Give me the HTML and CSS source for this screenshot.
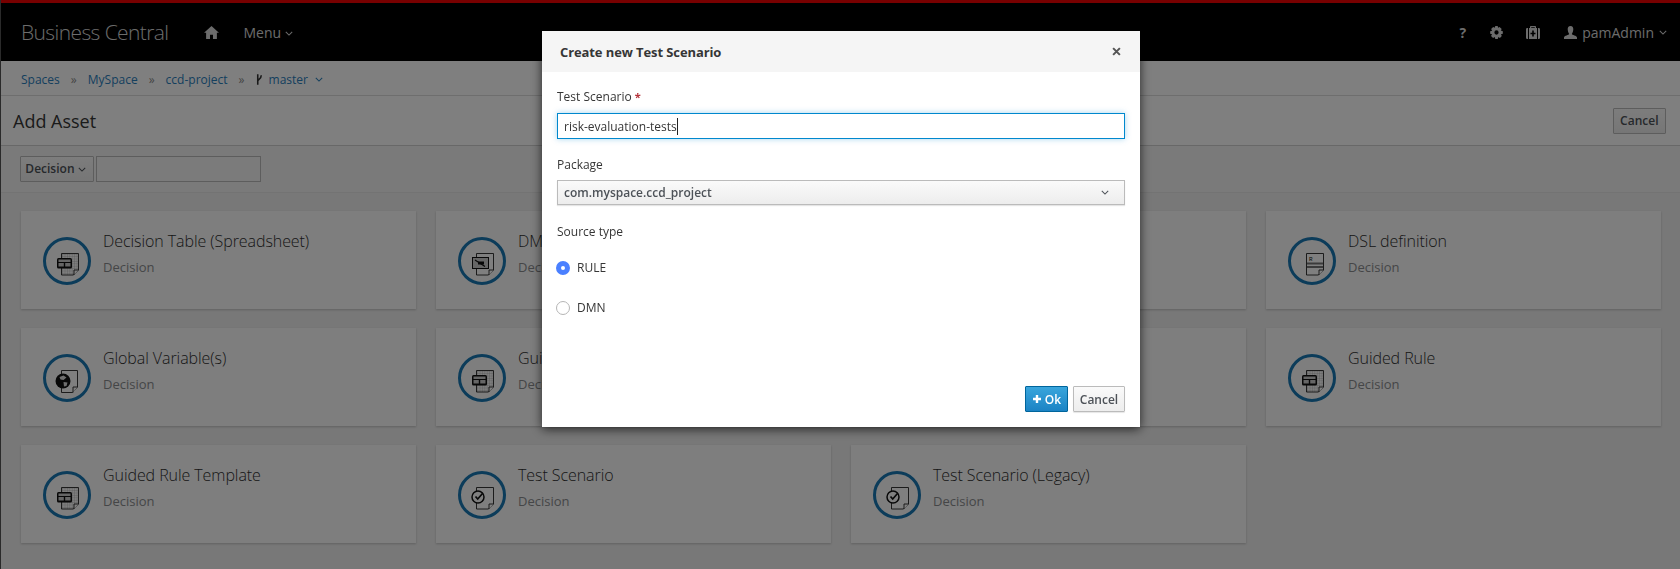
FILE: index.html
```html
<!DOCTYPE html>
<html lang="en">
<head>
  <meta charset="UTF-8" />
  <meta name="viewport" content="width=device-width, initial-scale=1.0"/>
  <title>Business Central</title>
  <link rel="stylesheet" href="styles.css">
</head>
<body>
  <!-- Icon sprite -->
  <svg class="sprite" width="0" height="0">
    <defs>
      <pattern id="grid" width="2.4" height="2.4" patternUnits="userSpaceOnUse">
        <path d="M2.4 0H0V2.4" fill="none" stroke="#999" stroke-width=".5"/>
      </pattern>
      <symbol id="ring" viewBox="0 0 48 48">
        <circle cx="24" cy="24" r="22.5" fill="none" stroke="#1878b4" stroke-width="3"/>
      </symbol>
      <symbol id="doc-table" viewBox="0 0 48 48">
        <path d="M18.5 16.5H35.5V33L30.5 38H18.5Z" fill="url(#grid)" stroke="#222" stroke-width=".9"/>
        <path d="M35.5 33H31V38" fill="#fff" stroke="#222" stroke-width=".9"/>
        <rect x="14" y="21" width="15" height="10.5" rx="1.5" fill="#111"/>
        <rect x="15.5" y="22.5" width="12" height="2.5" fill="#ccc"/>
        <rect x="15.5" y="26" width="5.3" height="3.5" fill="#ccc"/>
        <rect x="22.2" y="26" width="5.3" height="3.5" fill="#ccc"/>
      </symbol>
      <symbol id="doc-dmn" viewBox="0 0 48 48">
        <path d="M18.5 16.5H35.5V33L30.5 38H18.5Z" fill="#fff" stroke="#222" stroke-width=".9"/>
        <path d="M35.5 33H31V38" fill="#fff" stroke="#222" stroke-width=".9"/>
        <rect x="14.5" y="20.5" width="16" height="11" fill="#ccc" stroke="#111"/>
        <path d="M17 23L27 29.5" stroke="#111" stroke-width="1.2"/>
        <rect x="20" y="24.5" width="6" height="3" fill="#111"/>
      </symbol>
      <symbol id="doc-globe" viewBox="0 0 48 48">
        <path d="M18.5 16.5H34.5V33L29.5 38.5H18.5Z" fill="#fff" stroke="#222" stroke-width=".9"/>
        <path d="M34.5 33H30V38.5" fill="#fff" stroke="#222" stroke-width=".9"/>
        <circle cx="20" cy="27" r="7.5" fill="#111"/>
        <path d="M16.5 23L20.5 21.5L23.5 23.5L20.5 26L17.5 25.5ZM20.5 28L24.5 28.5L23.5 32L21 32.5Z" fill="#ddd"/>
      </symbol>
      <symbol id="doc-check" viewBox="0 0 48 48">
        <path d="M18.5 16.5H35.5V33L30.5 38H18.5Z" fill="#fff" stroke="#222" stroke-width=".9"/>
        <path d="M35.5 33H31V38" fill="#fff" stroke="#222" stroke-width=".9"/>
        <circle cx="20" cy="26" r="6" fill="#fff" stroke="#111" stroke-width="1.5"/>
        <path d="M17.5 25.5L19.7 28L24.5 22.5" fill="none" stroke="#111" stroke-width="1.7"/>
      </symbol>
      <symbol id="doc-dsl" viewBox="0 0 48 48">
        <path d="M18.5 16.5H35.5V33L30.5 38H18.5Z" fill="#fff" stroke="#222" stroke-width=".9"/>
        <path d="M35.5 33H31V38" fill="#fff" stroke="#222" stroke-width=".9"/>
        <text x="21" y="24" font-family="Liberation Mono, monospace" font-size="6" fill="#111">R</text>
        <path d="M19 26.5H35M19 30H35" stroke="#777" stroke-width="2"/>
      </symbol>
      <symbol id="chevron" viewBox="0 0 10 6">
        <path d="M1 1L5 5L9 1" fill="none" stroke="currentColor" stroke-width="1.3"/>
      </symbol>
    </defs>
  </svg>

  <div class="page">
    <nav class="navbar">
      <div class="nav-left">
        <span class="brand">Business Central</span>
        <svg class="nav-icon home-icon" viewBox="0 0 16 14"><path d="M8 0L16 7.2H13.8V14H9.6V9.4H6.4V14H2.2V7.2H0Z" fill="currentColor"/></svg>
        <span class="nav-menu">Menu <svg class="caret"><use href="#chevron"/></svg></span>
      </div>
      <div class="nav-right">
        <span class="nav-help">?</span>
        <svg class="nav-icon gear-icon" viewBox="0 0 14 14"><path fill-rule="evenodd" d="M5.7 0H8.3L8.7 2L10.3 1L12.6 3.1L11.6 4.9L13.8 5.6V8.4L11.8 9L12.7 10.8L10.7 12.9L9 11.8L8.3 14H5.7L5.1 11.9L3.3 12.9L1.1 10.8L2.2 9L.2 8.4V5.6L2.3 5L1.2 3.1L3.4 1L5.1 2ZM7 4.7A2.3 2.3 0 1 0 7 9.3A2.3 2.3 0 1 0 7 4.7Z" fill="currentColor"/></svg>
        <svg class="nav-icon case-icon" viewBox="0 0 14 13"><path fill-rule="evenodd" d="M4 2V.8Q4 0 4.8 0H9.2Q10 0 10 .8V2H11V13H3V2ZM5.2 2H8.8V1.2H5.2ZM6.2 4.5V6.7H4.5V8.3H6.2V10.5H7.8V8.3H9.5V6.7H7.8V4.5ZM0 3.2Q0 2 1.2 2H2V13H1.2Q0 13 0 11.8ZM12 2H12.8Q14 2 14 3.2V11.8Q14 13 12.8 13H12Z" fill="currentColor"/></svg>
        <span class="nav-user">
          <svg class="nav-icon user-icon" viewBox="0 0 14 14"><path d="M7 0C9.2 0 10.2 1.7 10 3.8C9.8 5.9 9 7.8 8.4 8.6C8.4 9.6 14 10.4 14 12.5V14H0V12.5C0 10.4 5.6 9.6 5.6 8.6C5 7.8 4.2 5.9 4 3.8C3.8 1.7 4.8 0 7 0Z" fill="currentColor"/></svg>
          pamAdmin <svg class="caret"><use href="#chevron"/></svg>
        </span>
      </div>
    </nav>

    <div class="breadcrumbs">
      <a class="crumb">Spaces</a><span class="crumb-sep">»</span>
      <a class="crumb">MySpace</a><span class="crumb-sep">»</span>
      <a class="crumb">ccd-project</a><span class="crumb-sep">»</span>
      <svg class="branch-icon" viewBox="0 0 8 12"><path d="M2 0V12M2 8C2 5.5 6 6 6 1" fill="none" stroke="#333" stroke-width="1.8"/></svg>
      <a class="crumb">master</a>
      <svg class="caret crumb-caret"><use href="#chevron"/></svg>
    </div>

    <div class="title-bar">
      <h1>Add Asset</h1>
      <button class="btn">Cancel</button>
    </div>

    <div class="filter-bar">
      <button class="btn btn-filter">Decision <svg class="caret"><use href="#chevron"/></svg></button>
      <div class="filter-input"></div>
    </div>

    <div class="cards">
      <div class="card"><svg class="card-icon"><use href="#ring"/><use href="#doc-table"/></svg><div><div class="card-title">Decision Table (Spreadsheet)</div><div class="card-sub">Decision</div></div></div>
      <div class="card"><svg class="card-icon"><use href="#ring"/><use href="#doc-dmn"/></svg><div><div class="card-title">DMN</div><div class="card-sub">Decision</div></div></div>
      <div class="card"><svg class="card-icon"><use href="#ring"/><use href="#doc-dsl"/></svg><div><div class="card-title">DRL file</div><div class="card-sub">Decision</div></div></div>
      <div class="card"><svg class="card-icon"><use href="#ring"/><use href="#doc-dsl"/></svg><div><div class="card-title">DSL definition</div><div class="card-sub">Decision</div></div></div>
      <div class="card"><svg class="card-icon"><use href="#ring"/><use href="#doc-globe"/></svg><div><div class="card-title">Global Variable(s)</div><div class="card-sub">Decision</div></div></div>
      <div class="card"><svg class="card-icon"><use href="#ring"/><use href="#doc-table"/></svg><div><div class="card-title">Guided Decision Table</div><div class="card-sub">Decision</div></div></div>
      <div class="card"><svg class="card-icon"><use href="#ring"/><use href="#doc-table"/></svg><div><div class="card-title">Guided Decision Tree</div><div class="card-sub">Decision</div></div></div>
      <div class="card"><svg class="card-icon"><use href="#ring"/><use href="#doc-table"/></svg><div><div class="card-title">Guided Rule</div><div class="card-sub">Decision</div></div></div>
      <div class="card"><svg class="card-icon"><use href="#ring"/><use href="#doc-table"/></svg><div><div class="card-title">Guided Rule Template</div><div class="card-sub">Decision</div></div></div>
      <div class="card"><svg class="card-icon"><use href="#ring"/><use href="#doc-check"/></svg><div><div class="card-title">Test Scenario</div><div class="card-sub">Decision</div></div></div>
      <div class="card"><svg class="card-icon"><use href="#ring"/><use href="#doc-check"/></svg><div><div class="card-title">Test Scenario (Legacy)</div><div class="card-sub">Decision</div></div></div>
    </div>
  </div>

  <!-- Modal -->
  <div class="backdrop">
    <div class="modal">
      <div class="modal-header">
        <span class="modal-title">Create new Test Scenario</span>
        <svg class="modal-close" viewBox="0 0 8 8"><path d="M1 1L7 7M7 1L1 7" stroke="#555" stroke-width="1.8"/></svg>
      </div>
      <div class="modal-body">
        <div class="field-label">Test Scenario <span class="required">*</span></div>
        <div class="text-input"><span class="typed">risk-evaluation-tests</span></div>
        <div class="field-label package-label">Package</div>
        <div class="select-input">com.myspace.ccd_project <svg class="caret"><use href="#chevron"/></svg></div>
        <div class="field-label source-label">Source type</div>
        <div class="radio-row"><span class="radio radio-on"></span>RULE</div>
        <div class="radio-row"><span class="radio"></span>DMN</div>
      </div>
      <div class="modal-footer">
        <button class="btn btn-primary">
          <svg class="plus-icon" viewBox="0 0 10 10"><path d="M5 1V9M1 5H9" stroke="#fff" stroke-width="2.4"/></svg>
          Ok
        </button>
        <button class="btn btn-default">Cancel</button>
      </div>
    </div>
  </div>
</body>
</html>
```

FILE: styles.css
```css
* {
  box-sizing: border-box;
}

html, body {
  height: 100%;
}

body {
  margin: 0;
  font-family: 'Open Sans', sans-serif;
  font-size: 12px;
  color: #363636;
  background: #f0f0f0;
  overflow: hidden;
}

.sprite {
  display: block;
  height: 0;
}

.page {
  height: 100%;
  border-left: 1px solid #555;
}

.caret {
  width: 8px;
  height: 5px;
  vertical-align: middle;
}

/* Top bar */
.navbar {
  height: 61px;
  background: #000;
  border-top: 3px solid #e00;
  display: flex;
  justify-content: space-between;
  align-items: center;
  color: #d8d8d8;
}

.nav-left, .nav-right {
  display: flex;
  align-items: center;
}

.brand {
  margin-left: 20px;
  font-size: 21px;
  font-weight: 300;
  letter-spacing: -0.6px;
}

.nav-icon {
  display: block;
}

.home-icon {
  width: 15px;
  height: 13px;
  margin-left: 36px;
}

.nav-menu {
  margin-left: 24px;
  font-size: 14px;
  font-weight: 400;
}

.nav-right {
  margin-right: 13px;
}

.nav-help {
  font-size: 14px;
  font-weight: 700;
}

.gear-icon {
  width: 13px;
  height: 13px;
  margin-left: 24px;
}

.case-icon {
  width: 14px;
  height: 13px;
  margin-left: 23px;
}

.nav-user {
  display: flex;
  align-items: center;
  gap: 5px;
  margin-left: 24px;
  font-size: 14px;
}

.user-icon {
  width: 13px;
  height: 13px;
}

/* Breadcrumbs */
.breadcrumbs {
  height: 35px;
  padding: 2px 0 0 20px;
  display: flex;
  align-items: center;
  border-bottom: 1px solid #ddd;
  background: #fff;
}

.crumb {
  color: #2a80bc;
}

.crumb-sep {
  margin: 0 11px;
  color: #8c8c8c;
}

.branch-icon {
  width: 7px;
  height: 11px;
  margin: 0 6px 0 0;
}

.crumb-caret {
  margin-left: 7px;
  color: #2a80bc;
}

/* Title */
.title-bar {
  height: 50px;
  padding: 0 14px 0 12px;
  display: flex;
  justify-content: space-between;
  align-items: center;
  border-bottom: 1px solid #d1d1d1;
  background: #fff;
}

h1 {
  margin: 0;
  font-size: 18px;
  font-weight: 400;
}

.btn {
  height: 26px;
  padding: 0 6.5px;
  font: 600 12px 'Open Sans', sans-serif;
  color: #4d5258;
  background: linear-gradient(#fafafa, #ededed);
  border: 1px solid #bbb;
  border-radius: 1px;
}

/* Filter */
.filter-bar {
  height: 47px;
  padding: 10px 0 0 19px;
  display: flex;
  gap: 2px;
  border-bottom: 1px solid #e6e6e6;
  background: #f5f5f5;
}

.btn-filter {
  width: 74px;
  height: 26px;
  padding: 0 3px 2px 0;
}

.filter-input {
  width: 165px;
  height: 26px;
  background: #f7f7f7;
  border: 1px solid #bbb;
}

/* Asset cards */
.cards {
  padding: 18px 19px 0 20px;
  display: grid;
  grid-template-columns: repeat(4, 395px);
  grid-auto-rows: 98px;
  gap: 19px 20px;
}

.card {
  padding: 26px 0 0 22px;
  display: flex;
  gap: 12px;
  background: #fcfcfc;
  box-shadow: 0 1px 2px rgba(0, 0, 0, .2);
}

.card-icon {
  width: 48px;
  height: 48px;
  flex: none;
}

.card-title {
  margin-top: -6px;
  font-size: 16px;
  font-weight: 300;
  line-height: 20px;
  letter-spacing: -0.07px;
  color: #2e2e2e;
}

.card-sub {
  margin-top: 7px;
  font-size: 13px;
  line-height: 18px;
  color: #8b8d8f;
}

/* Modal */
.backdrop {
  position: fixed;
  top: 0;
  left: 0;
  right: 0;
  bottom: 0;
  padding-left: 2px;
  display: flex;
  justify-content: center;
  align-items: flex-start;
  background: rgba(0, 0, 0, .5);
}

.modal {
  width: 598px;
  height: 396px;
  margin-top: 31px;
  background: #fff;
  box-shadow: 0 2px 10px rgba(0, 0, 0, .7);
  display: flex;
  flex-direction: column;
}

.modal-header {
  height: 41px;
  padding: 0 19px 0 18px;
  flex: none;
  display: flex;
  justify-content: space-between;
  align-items: center;
  background: #f5f5f5;
}

.modal-title {
  font-size: 13px;
  font-weight: 700;
  letter-spacing: -0.1px;
}

.modal-close {
  width: 9px;
  height: 9px;
}

.modal-body {
  flex: 1;
  padding: 16px 15px 0;
}

.field-label {
  font-size: 12px;
  font-weight: 400;
  line-height: 18px;
}

.required {
  margin-left: 0;
  font-size: 11px;
  font-weight: 700;
  color: #b5323a;
}

.text-input {
  height: 26px;
  margin-top: 7px;
  padding-left: 6px;
  display: flex;
  align-items: center;
  border: 1px solid #0088ce;
  box-shadow: 0 0 6px rgba(0, 136, 206, .35);
}

.typed {
  border-right: 1px solid #222;
  line-height: 17px;
}

.package-label {
  margin-top: 17px;
}

.select-input {
  height: 25px;
  margin-top: 6px;
  padding: 0 15px 0 6px;
  display: flex;
  justify-content: space-between;
  align-items: center;
  font-weight: 600;
  color: #4d5258;
  background: linear-gradient(#fafafa, #ededed);
  border: 1px solid #bbb;
  box-shadow: 0 1px 1px rgba(0, 0, 0, .1);
}

.source-label {
  margin-top: 18px;
}

.radio-row {
  margin-top: 22px;
  margin-left: -1px;
  display: flex;
  align-items: center;
  gap: 7px;
  line-height: 18px;
}

.source-label + .radio-row {
  margin-top: 18px;
}

.radio {
  width: 14px;
  height: 14px;
  border: 1px solid #b5b5b5;
  border-radius: 50%;
  background: #fff;
}

.radio-on {
  border: 5px solid #4a80ff;
}

.modal-footer {
  padding: 0 15px 15px 0;
  display: flex;
  justify-content: flex-end;
  gap: 5px;
}

.btn-primary {
  width: 43px;
  height: 26px;
  padding: 0;
  display: flex;
  justify-content: center;
  align-items: center;
  gap: 3px;
  color: #fff;
  background: linear-gradient(#39a5dc, #1b83c4);
  border-color: #00659c;
}

.plus-icon {
  width: 10px;
  height: 10px;
}

.btn-default {
  width: 52px;
  height: 26px;
  padding: 0;
  box-shadow: 0 1px 1px rgba(0, 0, 0, .1);
}
```
